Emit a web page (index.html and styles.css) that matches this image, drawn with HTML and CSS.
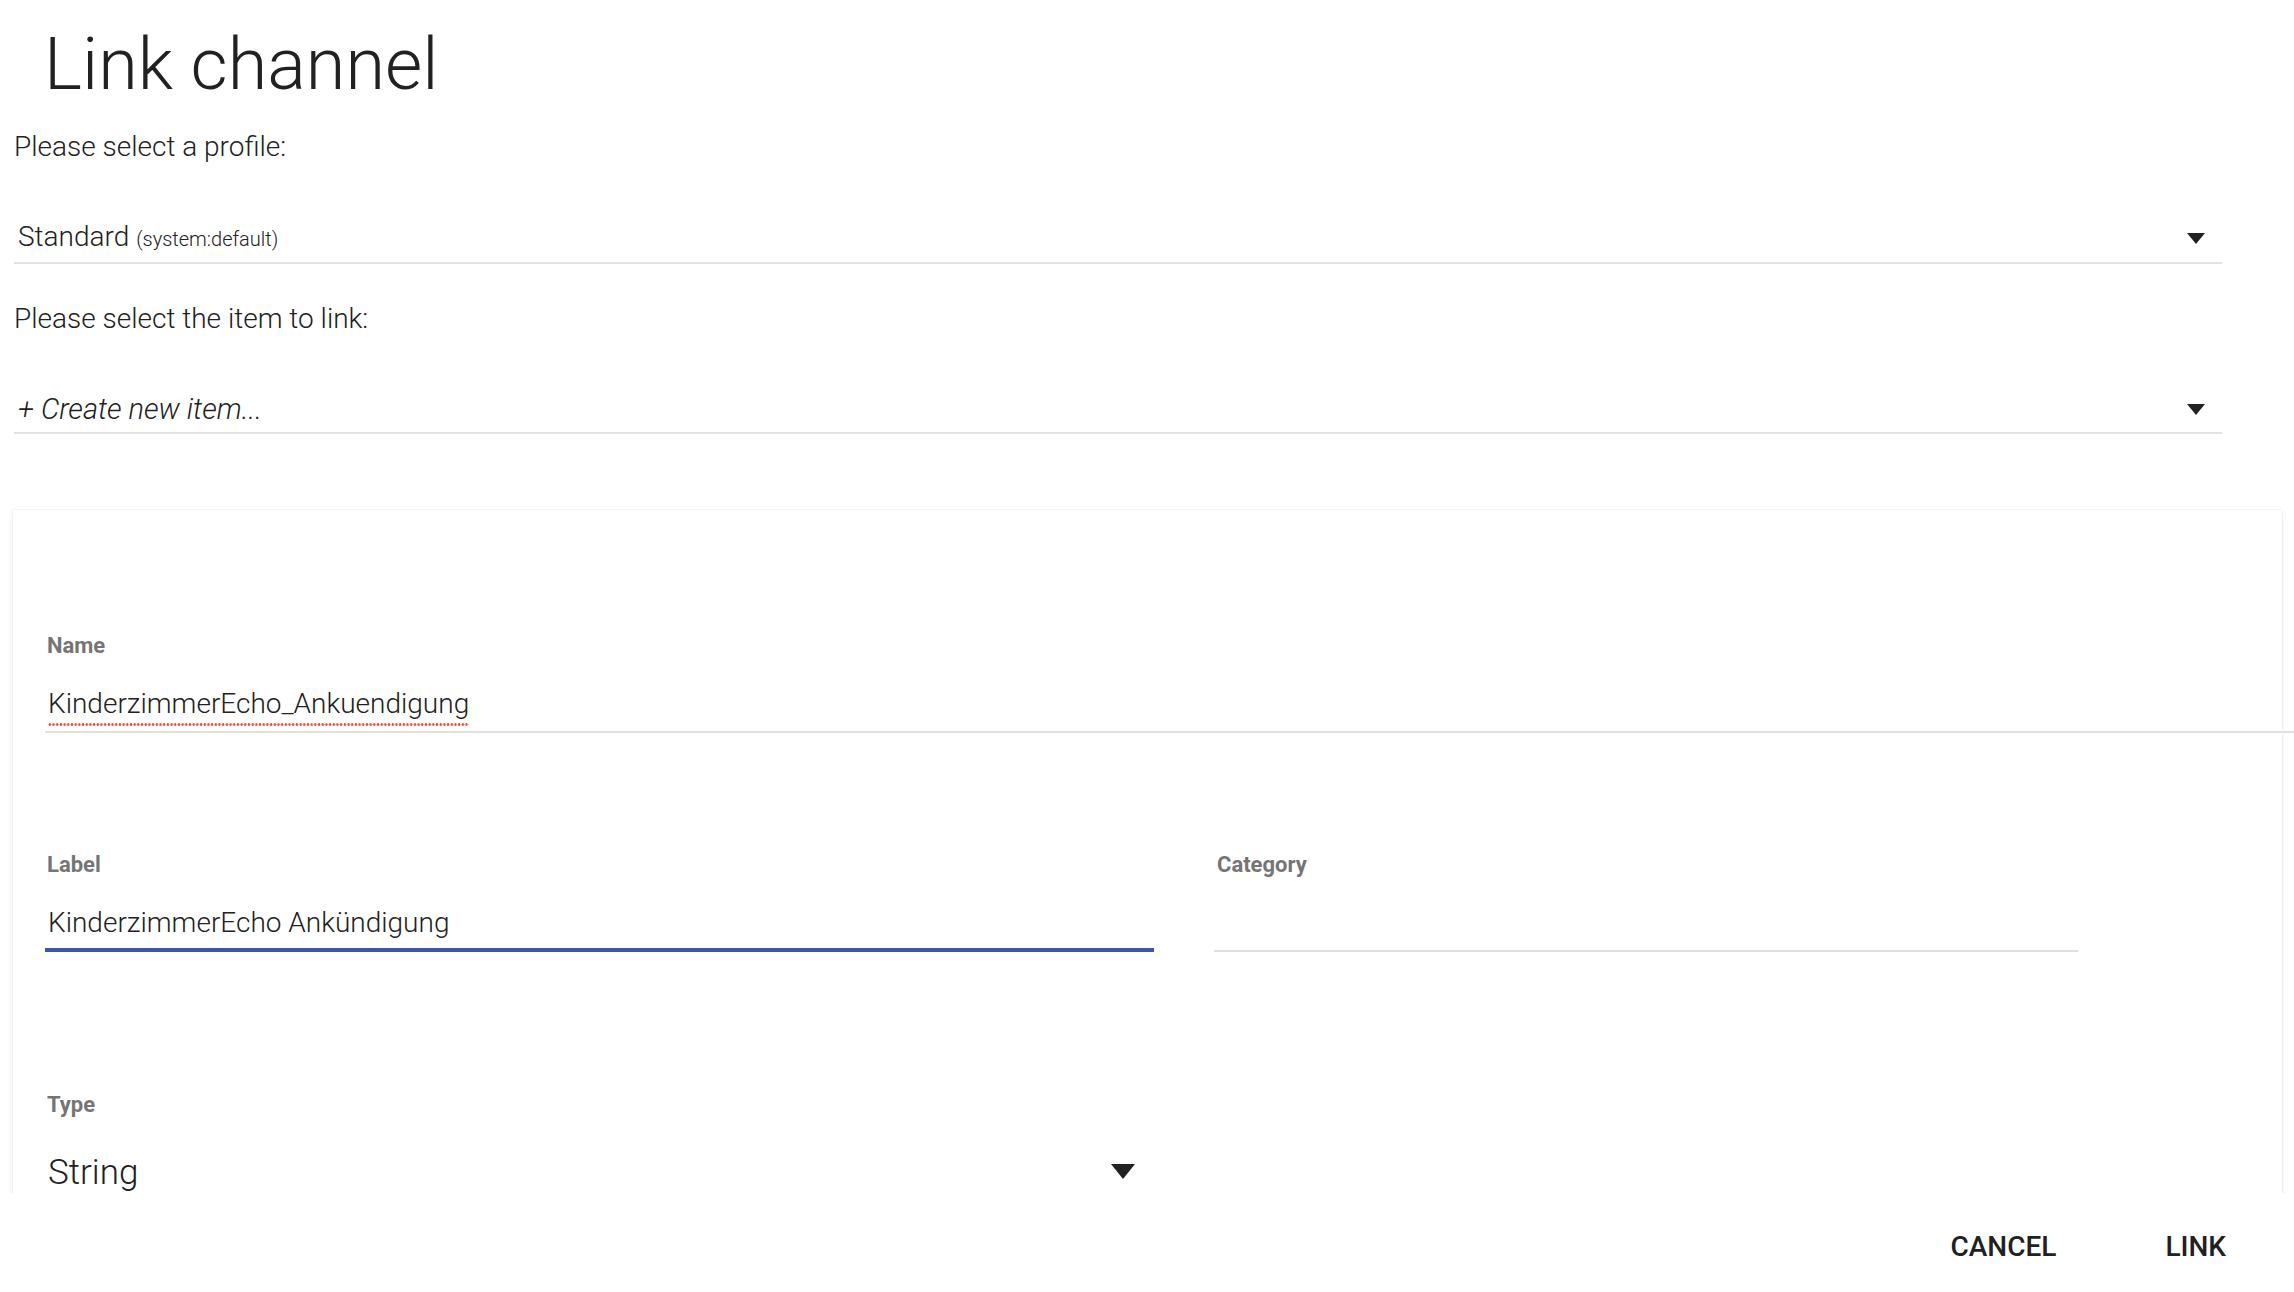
FILE: index.html
```html
<!DOCTYPE html>
<html lang="en">
<head>
<meta charset="utf-8">
<title>Link channel</title>
<link rel="stylesheet" href="styles.css">
</head>
<body>
<div class="dialog">
  <div class="scroll">
    <h2 class="title">Link channel</h2>
    <p class="prompt">Please select a profile:</p>
    <div class="select">
      <span class="select-value">Standard <small class="sub">(system:default)</small></span>
      <svg class="arrow" width="18" height="11" viewBox="0 0 18 11"><polygon points="0,0 18,0 9,11" fill="#212121"/></svg>
    </div>
    <p class="prompt prompt-item">Please select the item to link:</p>
    <div class="select select-item">
      <span class="select-value italic">+ Create new item...</span>
      <svg class="arrow" width="18" height="11" viewBox="0 0 18 11"><polygon points="0,0 18,0 9,11" fill="#212121"/></svg>
    </div>
    <div class="card">
      <div class="field field-name">
        <div class="field-label">Name</div>
        <div class="field-input"><span class="spell">KinderzimmerEcho_Ankuendigung</span></div>
      </div>
      <div class="field-row">
        <div class="field field-label-col">
          <div class="field-label">Label</div>
          <div class="field-input focused">KinderzimmerEcho Ankündigung</div>
        </div>
        <div class="field field-cat">
          <div class="field-label">Category</div>
          <div class="field-input empty">&nbsp;</div>
        </div>
      </div>
      <div class="field field-type">
        <div class="field-label">Type</div>
        <div class="type-select">
          <span class="type-value">String</span>
          <svg class="type-arrow" width="24" height="15" viewBox="0 0 24 15"><polygon points="0,0 24,0 12,15" fill="#212121"/></svg>
        </div>
      </div>
    </div>
  </div>
  <div class="actions">
    <button class="btn btn-cancel">CANCEL</button>
    <button class="btn btn-link">LINK</button>
  </div>
</div>
</body>
</html>
```

FILE: styles.css
```css
html, body {
  margin: 0;
  padding: 0;
  background: #ffffff;
  overflow: hidden;
}

body {
  font-family: Roboto, "Noto Sans", "Liberation Sans", sans-serif;
  color: #212121;
  width: 2294px;
  height: 1292px;
}

.dialog {
  display: flex;
  flex-direction: column;
  height: 1292px;
}

.scroll {
  height: 1193px;
  overflow: hidden;
  padding-left: 14px;
  box-sizing: border-box;
}

.title {
  margin: 15px 0 0 0;
  padding-left: 30px;
  font-size: 72px;
  font-weight: 300;
  line-height: 100px;
  color: #212121;
}

.prompt {
  margin: 14px 0 0 0;
  font-size: 28px;
  font-weight: 300;
  line-height: 36px;
}

.prompt-item {
  margin-top: 37px;
}

.select {
  width: 2208px;
  box-sizing: border-box;
  margin-top: 54px;
  display: flex;
  align-items: center;
  justify-content: space-between;
  padding: 0 17px 5px 4px;
  border-bottom: 2px solid #e2e2e2;
}

.select-value {
  font-size: 28px;
  font-weight: 300;
  line-height: 36px;
}

.sub {
  font-size: 20px;
  font-weight: 300;
}

.italic {
  font-style: italic;
  font-size: 29px;
}

.arrow {
  display: block;
}

.card {
  margin: 76px 0 0 -1px;
  width: 2269px;
  padding: 122px 0 200px 32px;
  box-sizing: border-box;
  background: #ffffff;
  box-shadow: 0 1px 5px rgba(0, 0, 0, 0.10), 0 0 2px rgba(0, 0, 0, 0.05);
}

.field-label {
  padding-left: 2px;
  font-size: 22px;
  font-weight: 700;
  line-height: 28px;
  color: #757575;
}

.field-input {
  margin-top: 26px;
  font-size: 28px;
  font-weight: 300;
  line-height: 36px;
  padding: 0 0 9px 3px;
  border-bottom: 2px solid #e0e0e0;
}

.field-name {
  width: 2260px;
}

.spell {
  padding-bottom: 6px;
  background-image: radial-gradient(circle, #f44336 0, #f44336 1px, transparent 1.6px);
  background-size: 3.7px 3px;
  background-repeat: repeat-x;
  background-position: 0 100%;
}

.field-row {
  display: flex;
  gap: 60px;
  margin-top: 118px;
}

.field-label-col {
  width: 1109px;
}

.field-cat {
  width: 864px;
}

.field-cat .field-label {
  padding-left: 3px;
}

.field-input.focused {
  padding-bottom: 7px;
  border-bottom: 4px solid #3f51b5;
}

.field-type {
  margin-top: 139px;
  width: 1109px;
}

.type-select {
  margin-top: 32px;
  display: flex;
  align-items: center;
  justify-content: space-between;
  padding: 0 19px 0 3px;
}

.type-value {
  font-size: 35px;
  font-weight: 300;
  line-height: 44px;
}

.type-arrow {
  display: block;
  margin-bottom: 4px;
}

.actions {
  display: flex;
  justify-content: flex-end;
  gap: 29px;
  padding: 34px 28px 0 0;
}

.btn {
  background: transparent;
  border: 0;
  padding: 0 40px;
  font-family: Roboto, "Noto Sans", "Liberation Sans", sans-serif;
  font-size: 28px;
  font-weight: 500;
  line-height: 40px;
  color: #212121;
  cursor: pointer;
}
```
